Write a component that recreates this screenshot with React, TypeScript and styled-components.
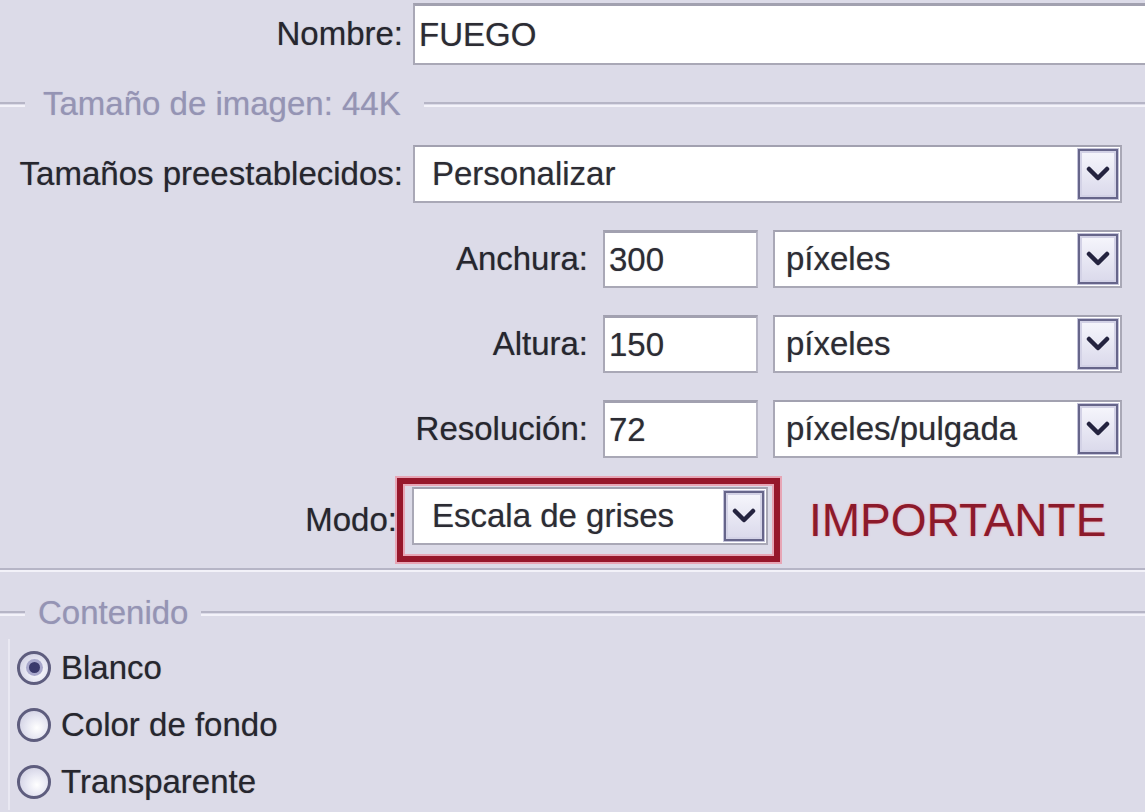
import React from "react";
import styled, { createGlobalStyle } from "styled-components";

const GlobalStyle = createGlobalStyle`
  html, body { margin: 0; padding: 0; background: #dcdbe8; }
  * { box-sizing: border-box; }
`;

const Dialog = styled.div`
  width: 1145px;
  height: 812px;
  overflow: hidden;
  background: #dcdbe8;
  display: flex;
  flex-direction: column;
  font-family: "Liberation Sans", Arial, sans-serif;
  font-size: 33px;
  color: #2a2a33;
  text-shadow: 0 0 1px rgba(30, 30, 40, 0.45);
`;

const FieldRow = styled.div<{ $cols: string; $top: number; $gap?: number }>`
  display: grid;
  grid-template-columns: ${(p) => p.$cols};
  column-gap: ${(p) => p.$gap ?? 10}px;
  align-items: center;
  margin-top: ${(p) => p.$top}px;
`;

const Label = styled.label`
  text-align: right;
  white-space: nowrap;
  color: #26262e;
`;

const TextBox = styled.div<{ $open?: boolean }>`
  height: ${(p) => (p.$open ? 62 : 58)}px;
  background: #ffffff;
  border: 2px solid #a9a8b6;
  border-top: 3px solid #a2a1b0;
  border-right: ${(p) => (p.$open ? "none" : "2px solid #b9b8c6")};
  display: flex;
  align-items: center;
  padding-left: 4px;
  white-space: nowrap;
  color: #2c2c34;
`;

const SelectBox = styled.div<{ $pad: number }>`
  height: 58px;
  background: #ffffff;
  border: 2px solid #a9a8b6;
  border-top-color: #a2a1b0;
  display: flex;
  align-items: center;
  padding-left: ${(p) => p.$pad}px;
  padding-right: 2px;
  color: #2c2c34;
`;

const SelectValue = styled.span`
  flex: 1;
  white-space: nowrap;
`;

const DropButton = styled.span`
  width: 40px;
  height: 50px;
  border: 2px solid #66658a;
  box-shadow: inset 0 0 0 2px #d3d2e6, 0 0 0 1px #c4c3da;
  background: linear-gradient(#f6f6fc, #dad9eb);
  display: flex;
  align-items: center;
  justify-content: center;
`;

const GroupHeader = styled.div<{ $top: number }>`
  display: flex;
  align-items: center;
  height: 32px;
  margin-top: ${(p) => p.$top}px;
`;

const GroupLine = styled.span<{ $width?: number }>`
  height: 5px;
  border-top: 2px solid #b6b5c6;
  border-bottom: 2px solid #f3f2f9;
  ${(p) => (p.$width ? `width: ${p.$width}px;` : "flex: 1;")}
`;

const GroupLegend = styled.span<{ $left: number; $right: number }>`
  padding: 0 ${(p) => p.$right}px 0 ${(p) => p.$left}px;
  color: #9594b4;
  text-shadow: 0 0 1px rgba(120, 120, 160, 0.4);
  white-space: nowrap;
`;

const RedFrame = styled.div`
  border: 6px solid #96172b;
  box-shadow: 0 0 0 2px rgba(238, 128, 146, 0.6), inset 0 0 0 2px rgba(238, 128, 146, 0.6);
  padding: 3px 6px 11px 9px;
`;

const Important = styled.span`
  margin-left: 29px;
  font-size: 46px;
  color: #8c1a2b;
  text-shadow: 0 0 2px rgba(255, 120, 140, 0.7);
  white-space: nowrap;
`;

const Separator = styled.div`
  margin-top: 6px;
  height: 4px;
  border-top: 2px solid #b6b5c6;
  border-bottom: 2px solid #f3f2f9;
`;

const RadioList = styled.div`
  margin-top: 10px;
  display: flex;
  flex-direction: column;
  border-left: 2px solid #e9e8f2;
  margin-left: 8px;
`;

const RadioRow = styled.div`
  height: 57px;
  display: flex;
  align-items: center;
  gap: 10px;
  padding-left: 7px;
  color: #26262e;
`;

const RadioDot = styled.span<{ $checked?: boolean }>`
  width: 34px;
  height: 34px;
  border-radius: 50%;
  border: 3px solid #5e5d7e;
  background: radial-gradient(circle at 60% 60%, #ffffff 0%, #e6e6f2 45%, #c7c6dc 100%);
  display: flex;
  align-items: center;
  justify-content: center;
  &::after {
    content: "";
    display: ${(p) => (p.$checked ? "block" : "none")};
    width: 11px;
    height: 11px;
    border-radius: 50%;
    background: #3b3a6c;
    box-shadow: 0 0 0 3px #a9a8cc;
  }
`;

const Chevron = () => (
  <svg width="24" height="16" viewBox="0 0 24 16" aria-hidden="true">
    <polyline points="3,3 12,12 21,3" fill="none" stroke="#24233f" strokeWidth="4.5" strokeLinecap="round" strokeLinejoin="round" />
  </svg>
);

const Select = ({ value, pad }: { value: string; pad: number }) => (
  <SelectBox $pad={pad}>
    <SelectValue>{value}</SelectValue>
    <DropButton>
      <Chevron />
    </DropButton>
  </SelectBox>
);

const dims = [
  { label: "Anchura:", value: "300", unit: "píxeles" },
  { label: "Altura:", value: "150", unit: "píxeles" },
  { label: "Resolución:", value: "72", unit: "píxeles/pulgada" },
];

const radios = [
  { label: "Blanco", checked: true },
  { label: "Color de fondo", checked: false },
  { label: "Transparente", checked: false },
];

export default function App() {
  return (
    <Dialog>
      <GlobalStyle />
      <FieldRow $cols="403px 1fr" $top={3}>
        <Label>Nombre:</Label>
        <TextBox $open>FUEGO</TextBox>
      </FieldRow>

      <GroupHeader $top={23}>
        <GroupLine $width={25} />
        <GroupLegend $left={18} $right={23}>Tamaño de imagen: 44K</GroupLegend>
        <GroupLine />
      </GroupHeader>

      <FieldRow $cols="403px 709px" $top={25}>
        <Label>Tamaños preestablecidos:</Label>
        <Select value="Personalizar" pad={17} />
      </FieldRow>

      {dims.map((d) => (
        <FieldRow key={d.label} $cols="588px 155px 349px" $top={27} $gap={15}>
          <Label>{d.label}</Label>
          <TextBox>{d.value}</TextBox>
          <Select value={d.unit} pad={11} />
        </FieldRow>
      ))}

      <FieldRow $cols="397px auto 1fr" $top={20} $gap={0}>
        <Label>Modo:</Label>
        <RedFrame>
          <FieldRow $cols="356px" $top={0}>
            <Select value="Escala de grises" pad={18} />
          </FieldRow>
        </RedFrame>
        <Important>IMPORTANTE</Important>
      </FieldRow>

      <Separator />

      <GroupHeader $top={25}>
        <GroupLine $width={25} />
        <GroupLegend $left={13} $right={13}>Contenido</GroupLegend>
        <GroupLine />
      </GroupHeader>

      <RadioList>
        {radios.map((r) => (
          <RadioRow key={r.label}>
            <RadioDot $checked={r.checked} />
            <span>{r.label}</span>
          </RadioRow>
        ))}
      </RadioList>
    </Dialog>
  );
}
